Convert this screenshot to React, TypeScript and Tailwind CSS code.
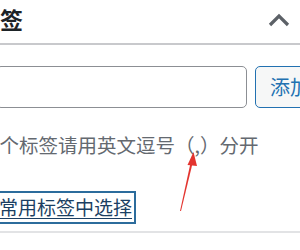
import React from 'react';

export default function App() {
  return (
    <div className="relative w-[300px] h-[250px] overflow-hidden bg-white font-['Noto_Sans_CJK_SC','Noto_Sans',sans-serif]">
      {/* header */}
      <div className="h-[45px] flex items-center justify-between border-b-2 border-[#c8c9cc] pb-[4px]">
        <h2 className="-ml-[23px] text-[23px] leading-none font-bold text-[#1d2327] whitespace-nowrap">标签</h2>
        <svg className="mr-[10px] w-[22px] h-[14px]" viewBox="0 0 22 14" fill="none" stroke="#5c6167" strokeWidth="3.2">
          <path d="M2 12 L11 3 L20 12" />
        </svg>
      </div>

      {/* input + button */}
      <div className="flex mt-[21px] -ml-[4px] gap-[8px]">
        <input className="w-[251px] h-[42px] shrink-0 border-[1.5px] border-[#8c8f94] rounded-[5px] outline-none" />
        <button className="h-[42px] shrink-0 pl-[14px] pr-[14px] border-[1.5px] border-[#2271b1] rounded-[5px] bg-[#f6f7f7] text-[#2271b1] text-[20px] leading-none whitespace-nowrap">
          添加
        </button>
      </div>

      {/* hint */}
      <p className="mt-[23px] -ml-[20px] text-[19.5px] leading-[28px] text-[#646970] whitespace-nowrap">
        多个标签请用英文逗号（,）分开
      </p>

      {/* link */}
      <div className="mt-[32px] flex">
        <a
          href="#"
          className="-ml-[24px] h-[33px] pl-[2px] pr-[2px] flex items-center border-2 border-[#2c6c9c] text-[#1b3f63] text-[19px] underline underline-offset-[3px] whitespace-nowrap"
        >
          从常用标签中选择
        </a>
      </div>

      <div className="mt-[7px] border-b-2 border-[#e2e3e5]" />

      {/* red annotation arrow */}
      <svg className="absolute left-0 top-0 w-[300px] h-[250px] pointer-events-none" viewBox="0 0 300 250">
        <path d="M180 211 L190.5 163 L192.5 163.5 L181 211 Z" fill="#e3342f" />
        <path d="M193.5 152 L187.5 165 L197 166 Z" fill="#e3342f" />
      </svg>
    </div>
  );
}
